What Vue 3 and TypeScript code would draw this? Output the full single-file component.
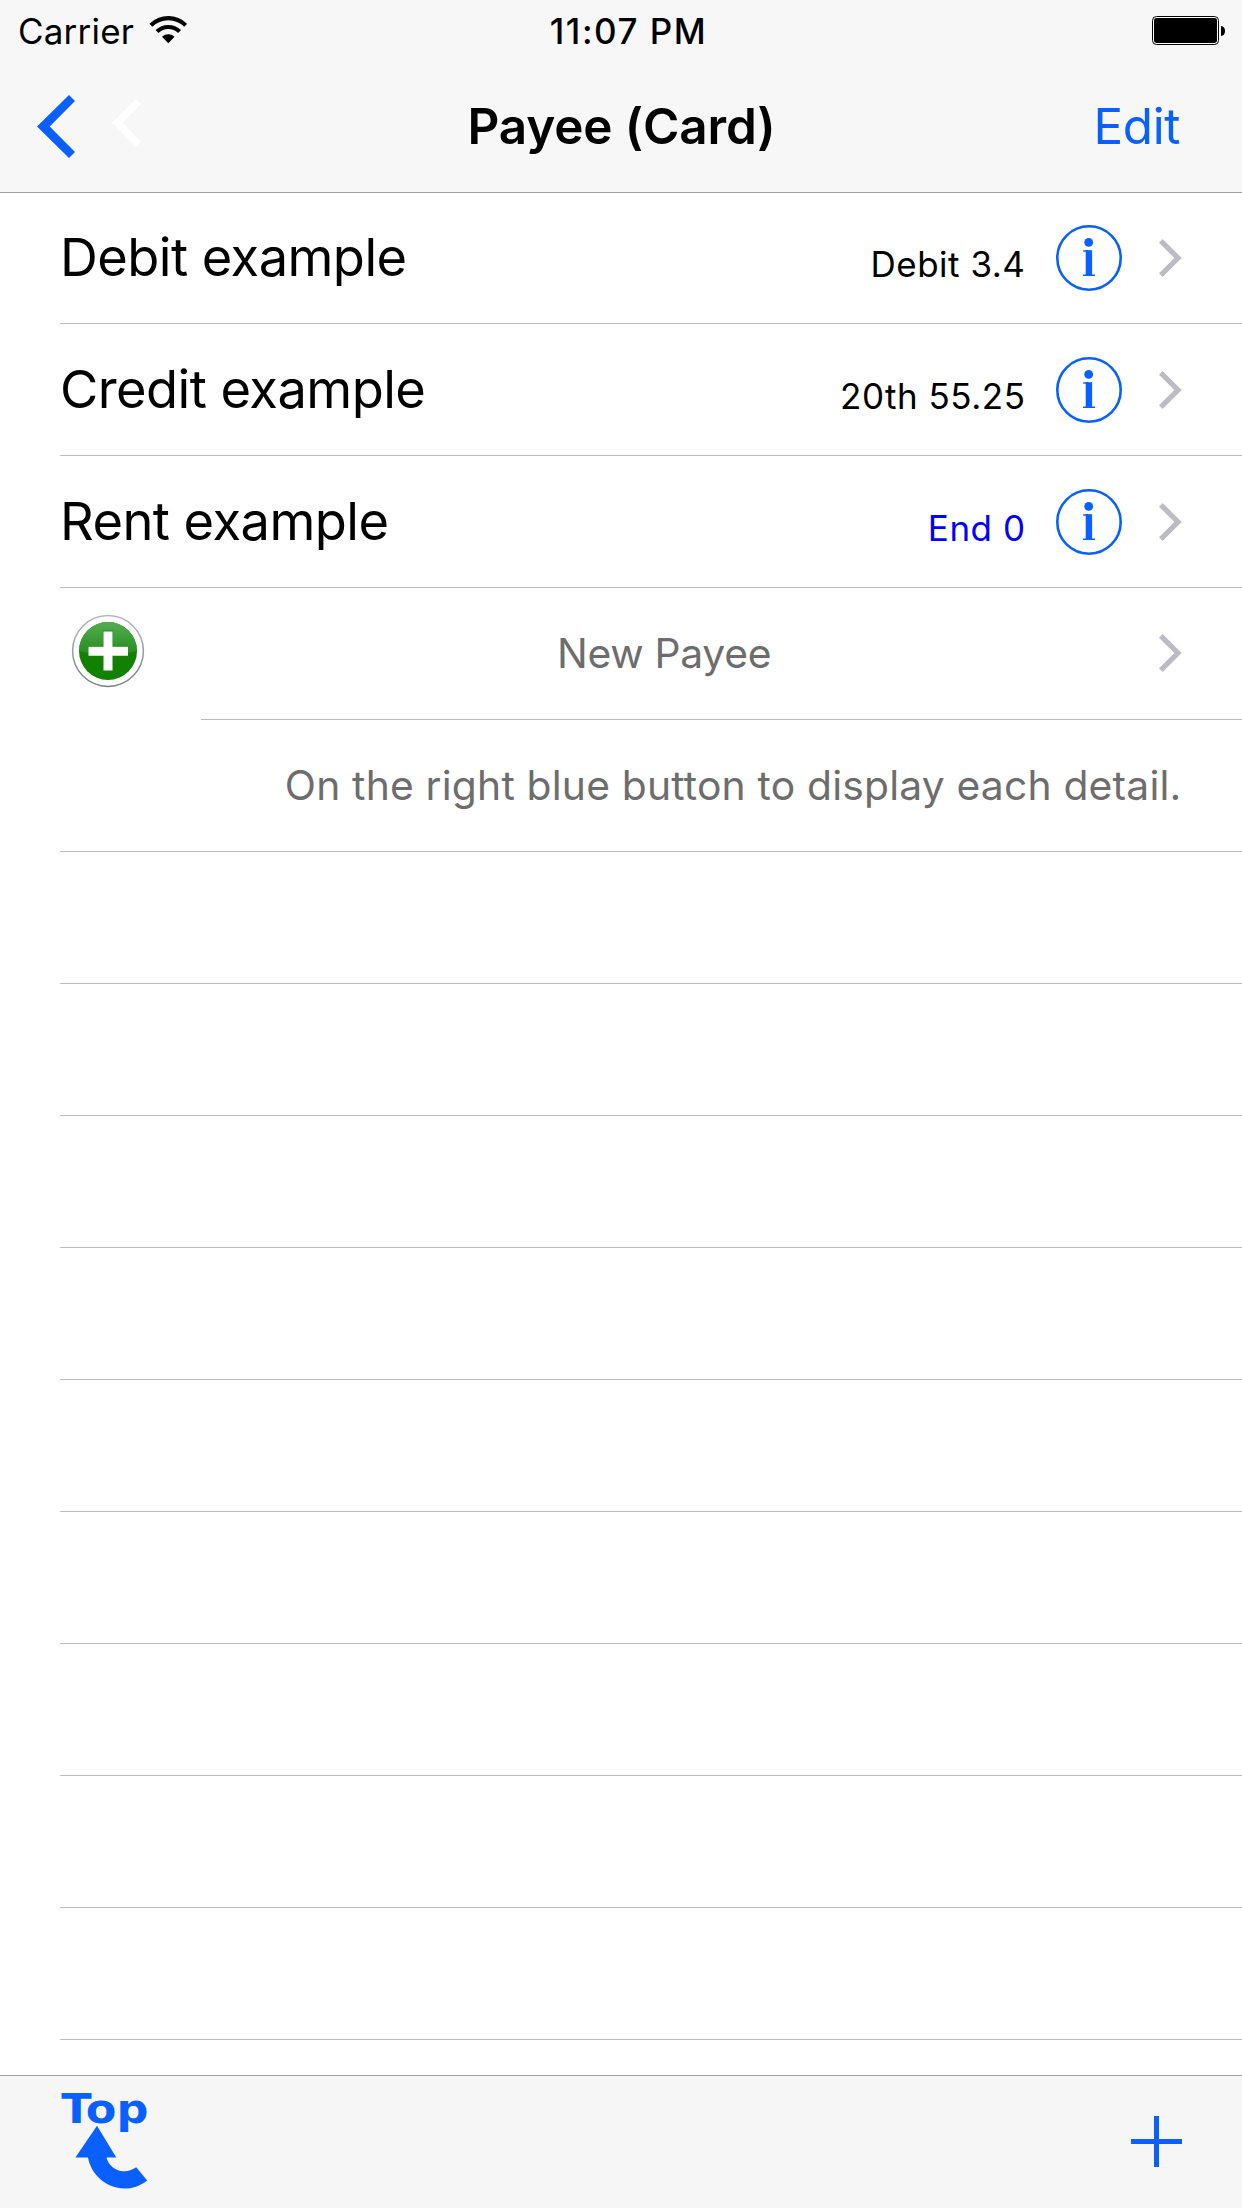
<script setup lang="ts">
interface Payee {
  name: string
  detail: string
  ended?: boolean
}

const payees: Payee[] = [
  { name: 'Debit example', detail: 'Debit 3.4' },
  { name: 'Credit example', detail: '20th 55.25' },
  { name: 'Rent example', detail: 'End 0', ended: true },
]

const emptyRows = 9
</script>

<template>
  <div class="screen">
    <header class="top">
      <div class="status">
        <div class="carrier">
          <span>Carrier</span>
          <svg class="wifi" width="38" height="28" viewBox="0 0 38 28">
            <g fill="none" stroke="#000" stroke-width="4.2">
              <path d="M1.9 9.3A24.8 24.8 0 0 1 36.7 9.3" />
              <path d="M8 15.6A16.2 16.2 0 0 1 30.6 15.6" />
            </g>
            <path d="M13 20.7A9.2 9.2 0 0 1 25.6 20.7L19.3 27.2Z" />
          </svg>
        </div>
        <span class="time">11:07 PM</span>
        <svg class="battery" width="74" height="29" viewBox="0 0 74 29">
          <rect x="0.5" y="0.5" width="66" height="28" rx="4" fill="#fff" stroke="#000" />
          <rect x="2" y="2" width="63" height="25" rx="2.4" />
          <path d="M69 10C71.7 10.3 73 12.3 73 15S71.7 19.7 69 20Z" />
        </svg>
      </div>
      <nav class="nav">
        <div class="back">
          <svg width="38" height="63" viewBox="0 0 38 63">
            <path fill="#0a60ff" d="M0 31.5 32 0 38 6 12.7 31.5 38 57 32 63Z" />
          </svg>
          <svg class="prev" width="29" height="48" viewBox="0 0 29 48">
            <path fill="#fff" d="M0 24 23.5 0 29 5 10.5 24 29 42.5 23.5 48Z" />
          </svg>
        </div>
        <h1>Payee (Card)</h1>
        <a class="edit">Edit</a>
      </nav>
    </header>

    <main class="list">
      <div v-for="p in payees" :key="p.name" class="row">
        <span class="name">{{ p.name }}</span>
        <span class="detail" :class="{ ended: p.ended }">{{ p.detail }}</span>
        <svg class="info" width="66" height="66" viewBox="0 0 66 66">
          <circle cx="33" cy="33" r="31.7" fill="none" stroke="#0a60ff" stroke-width="2.6" />
          <g fill="#0a60ff">
            <circle cx="32.7" cy="17.4" r="4.4" />
            <rect x="29.7" y="25.2" width="6.4" height="25.6" />
            <rect x="27.2" y="25.2" width="5" height="1.5" />
            <rect x="27" y="49.5" width="12" height="1.5" />
          </g>
        </svg>
        <svg class="chevron" width="24" height="40" viewBox="0 0 24 40">
          <path d="M2.8 2.8 20 20 2.8 37.2" />
        </svg>
      </div>

      <div class="add-row">
        <svg class="add" width="74" height="74" viewBox="0 0 74 74">
          <defs>
            <linearGradient id="ring" x1="0" y1="0" x2="0" y2="1">
              <stop offset="0" stop-color="#b4b8be" />
              <stop offset="1" stop-color="#7c7f85" />
            </linearGradient>
            <linearGradient id="gloss" x1="0" y1="0" x2="0" y2="1">
              <stop offset="0" stop-color="#55ad52" />
              <stop offset="1" stop-color="#238c1b" />
            </linearGradient>
            <clipPath id="disc"><circle cx="37" cy="37" r="29" /></clipPath>
          </defs>
          <circle cx="37" cy="37" r="35.4" fill="#fff" stroke="url(#ring)" stroke-width="1.5" />
          <circle cx="37" cy="37" r="29" fill="#128000" />
          <path clip-path="url(#disc)" fill="url(#gloss)" d="M8 8H66V37Q37 45 8 37Z" />
          <path fill="#0d6b06" d="M32 16.5H42V32H57V34H17V32H32Z" opacity=".55" />
          <path fill="#fff" d="M32.5 17.5H41.5V32.8H57V41.8H41.5V56.6H32.5V41.8H17.5V32.8H32.5Z" />
        </svg>
        <div class="add-body">
          <span class="add-label">New Payee</span>
          <svg class="chevron" width="24" height="40" viewBox="0 0 24 40">
            <path d="M2.8 2.8 20 20 2.8 37.2" />
          </svg>
        </div>
      </div>

      <div class="row hint">
        <span>On the right blue button to display each detail.</span>
      </div>

      <div v-for="n in emptyRows" :key="n" class="row"></div>
    </main>

    <footer class="toolbar">
      <svg class="to-top" width="100" height="110" viewBox="0 0 100 110">
        <g fill="#0a60ff">
          <text x="1.3" y="36.7" textLength="87" lengthAdjust="spacingAndGlyphs">Top</text>
          <path d="M37 39.7 56.3 71.6H46.5C48.5 80.5 57 85.6 64 85.2C69 85 73 83.6 76.2 81.2L87.2 94.4C80 100 72 102.7 64 102.6C47 102.5 31 89 28 71.6H15.4Z" />
        </g>
      </svg>
      <svg class="plus" width="51" height="51" viewBox="0 0 51 51">
        <path fill="#0a60ff" d="M23 0H28V23H51V28H28V51H23V28H0V23H23Z" />
      </svg>
    </footer>
  </div>
</template>

<style>
body {
  margin: 0;
  background: #fff;
}
</style>

<style scoped>
.screen {
  display: flex;
  flex-direction: column;
  width: 1242px;
  height: 2208px;
  overflow: hidden;
  background: #fff;
  color: #000;
  font-family: Inter, "Liberation Sans", sans-serif;
  white-space: nowrap;
}

svg {
  display: block;
  flex: none;
}

.top {
  flex: none;
  height: 192px;
  background: #f7f7f7;
  box-shadow: 0 1px 0 #a0a0a0;
}

.status {
  display: grid;
  grid-template-columns: 1fr auto 1fr;
  height: 60px;
  padding: 0 16px 0 18px;
  font-size: 35px;
  line-height: 62.5px;
}

.carrier {
  display: flex;
  letter-spacing: 0.2px;
}

.wifi {
  margin: 16px 0 0 15px;
}

.time {
  font-weight: 500;
  letter-spacing: 1.5px;
  margin-left: 13px;
}

.battery {
  justify-self: end;
  margin-top: 16px;
}

.nav {
  display: grid;
  grid-template-columns: 1fr auto 1fr;
  height: 132px;
  padding: 0 60px 0 37px;
  font-size: 49.4px;
  line-height: 132px;
}

.back {
  display: flex;
  padding-top: 35px;
}

.prev {
  margin: 4px 0 0 37px;
}

h1 {
  margin: 0 0 0 24px;
  font-size: inherit;
  font-weight: 600;
  letter-spacing: -0.13px;
}

.edit {
  justify-self: end;
  margin-right: 2px;
  color: #0a60ff;
  letter-spacing: -0.4px;
}

.list {
  flex: 1;
  min-height: 0;
}

.row {
  box-sizing: border-box;
  display: flex;
  height: 132px;
  margin-left: 60px;
  padding-right: 60px;
  border-bottom: 1px solid #bcbbc1;
}

.name {
  font-size: 52.4px;
  line-height: 130px;
  letter-spacing: -0.54px;
}

.detail {
  margin-left: auto;
  padding-right: 30.5px;
  font-size: 35px;
  line-height: 144.5px;
  letter-spacing: 0.52px;
}

.detail.ended {
  color: #0000ff;
}

.info {
  margin-top: 33px;
}

.chevron {
  margin: 46px 0 0 36px;
  fill: none;
  stroke: #bcbbc1;
  stroke-width: 5.2;
}

.add-row {
  display: flex;
  height: 132px;
}

.add {
  margin: 26px 56px 0 71px;
}

.add-body {
  box-sizing: border-box;
  flex: 1;
  display: flex;
  justify-content: space-between;
  padding-right: 60px;
  padding-left: 356px;
  border-bottom: 1px solid #bcbbc1;
}

.add-body .chevron {
  margin-top: 45px;
}

.add-label,
.hint {
  color: #6d6d6d;
  font-size: 40.8px;
  line-height: 130.3px;
}

.add-label {
  letter-spacing: -0.28px;
}

.hint {
  justify-content: flex-end;
  padding-right: 60.5px;
  letter-spacing: 0.19px;
}

.toolbar {
  box-sizing: border-box;
  flex: none;
  display: flex;
  justify-content: space-between;
  height: 133px;
  padding: 10px 60px 0 60px;
  border-top: 1px solid #a0a0a0;
  background: #f6f6f6;
}

.to-top text {
  font: 700 40px "DejaVu Sans", sans-serif;
}

.plus {
  margin-top: 30px;
}
</style>
